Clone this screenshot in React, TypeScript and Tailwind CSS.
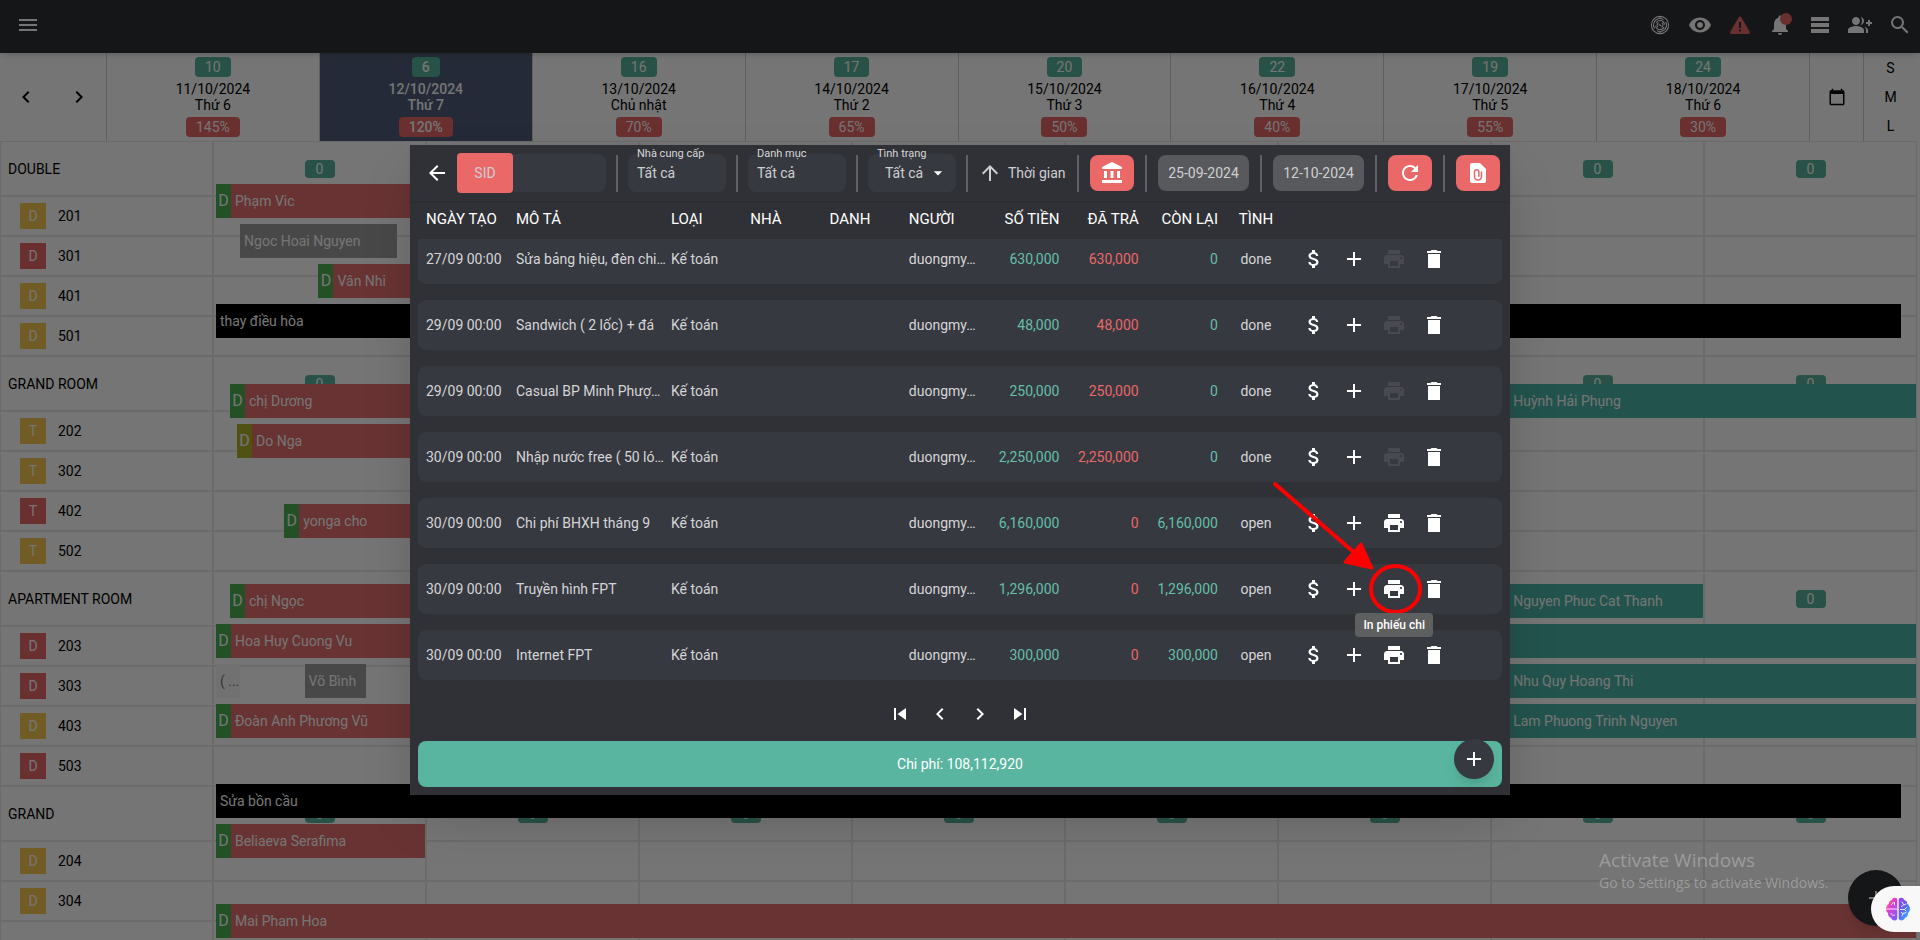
import type { ReactNode } from 'react';
import clsx from 'clsx';
import {
  MdAccountBalance,
  MdAdd,
  MdArrowBack,
  MdArrowDropDown,
  MdArrowUpward,
  MdAttachMoney,
  MdCalendarToday,
  MdChevronLeft,
  MdChevronRight,
  MdGroupAdd,
  MdMenu,
  MdNotifications,
  MdPrint,
  MdRefresh,
  MdSearch,
  MdSkipNext,
  MdSkipPrevious,
  MdTableRows,
  MdVisibility,
} from 'react-icons/md';

interface Day {
  date: string;
  weekday: string;
  free: number;
  load: string;
}

interface Room {
  number: string;
  status: string;
  dirty?: boolean;
}

interface RoomGroup {
  name: string;
  rooms: Room[];
}

type BookingKind = 'stay' | 'upcoming' | 'left' | 'blocked' | 'ghost';

interface Booking {
  lane: number;
  from: number; // in days from the first column
  to: number;
  name: string;
  kind: BookingKind;
  tag?: 'green' | 'lime';
}

interface Expense {
  created: string;
  description: string;
  amount: string;
  paid: string;
  left: string;
  status: 'done' | 'open';
}

const TODAY = '12/10/2024';

const days: Day[] = [
  { date: '11/10/2024', weekday: 'Thứ 6', free: 10, load: '145%' },
  { date: '12/10/2024', weekday: 'Thứ 7', free: 6, load: '120%' },
  { date: '13/10/2024', weekday: 'Chủ nhật', free: 16, load: '70%' },
  { date: '14/10/2024', weekday: 'Thứ 2', free: 17, load: '65%' },
  { date: '15/10/2024', weekday: 'Thứ 3', free: 20, load: '50%' },
  { date: '16/10/2024', weekday: 'Thứ 4', free: 22, load: '40%' },
  { date: '17/10/2024', weekday: 'Thứ 5', free: 19, load: '55%' },
  { date: '18/10/2024', weekday: 'Thứ 6', free: 24, load: '30%' },
];

const groups: RoomGroup[] = [
  {
    name: 'DOUBLE',
    rooms: [
      { number: '201', status: 'D' },
      { number: '301', status: 'D', dirty: true },
      { number: '401', status: 'D' },
      { number: '501', status: 'D' },
    ],
  },
  {
    name: 'GRAND ROOM',
    rooms: [
      { number: '202', status: 'T' },
      { number: '302', status: 'T' },
      { number: '402', status: 'T', dirty: true },
      { number: '502', status: 'T' },
    ],
  },
  {
    name: 'APARTMENT ROOM',
    rooms: [
      { number: '203', status: 'D', dirty: true },
      { number: '303', status: 'D', dirty: true },
      { number: '403', status: 'D' },
      { number: '503', status: 'D', dirty: true },
    ],
  },
  {
    name: 'GRAND',
    rooms: [
      { number: '204', status: 'D' },
      { number: '304', status: 'D' },
    ],
  },
  { name: '', rooms: [] },
];

const LANES = 19;

const bookings: Booking[] = [
  { lane: 0, from: 0.014, to: 0.995, name: 'Phạm Vic', kind: 'stay', tag: 'green' },
  { lane: 1, from: 0.127, to: 0.866, name: 'Ngoc Hoai Nguyen', kind: 'left' },
  { lane: 2, from: 0.495, to: 1.995, name: 'Vân Nhi', kind: 'stay', tag: 'green' },
  { lane: 3, from: 0.014, to: 7.925, name: 'thay điều hòa', kind: 'blocked' },
  { lane: 5, from: 0.08, to: 1.995, name: 'chị Dương', kind: 'stay', tag: 'green' },
  { lane: 5, from: 6.015, to: 7.995, name: 'Huỳnh Hải Phụng', kind: 'upcoming', tag: 'green' },
  { lane: 6, from: 0.113, to: 1.995, name: 'Do Nga', kind: 'stay', tag: 'lime' },
  { lane: 8, from: 0.334, to: 1.995, name: 'yonga cho', kind: 'stay', tag: 'green' },
  { lane: 10, from: 0.08, to: 1.995, name: 'chị Ngọc', kind: 'stay', tag: 'green' },
  { lane: 10, from: 6.015, to: 6.995, name: 'Nguyen Phuc Cat Thanh', kind: 'upcoming', tag: 'green' },
  { lane: 11, from: 0.014, to: 1.995, name: 'Hoa Huy Cuong Vu', kind: 'stay', tag: 'green' },
  { lane: 11, from: 5.015, to: 7.995, name: '', kind: 'upcoming', tag: 'green' },
  { lane: 12, from: 0.014, to: 0.127, name: '( ...', kind: 'ghost' },
  { lane: 12, from: 0.43, to: 0.718, name: 'Võ Bình', kind: 'left' },
  { lane: 12, from: 6.015, to: 7.995, name: 'Nhu Quy Hoang Thi', kind: 'upcoming', tag: 'green' },
  { lane: 13, from: 0.014, to: 1.995, name: 'Đoàn Anh Phương Vũ', kind: 'stay', tag: 'green' },
  { lane: 13, from: 6.015, to: 7.995, name: 'Lam Phuong Trinh Nguyen', kind: 'upcoming', tag: 'green' },
  { lane: 15, from: 0.014, to: 7.925, name: 'Sửa bồn cầu', kind: 'blocked' },
  { lane: 16, from: 0.014, to: 0.995, name: 'Beliaeva Serafima', kind: 'stay', tag: 'green' },
  { lane: 18, from: 0.014, to: 7.995, name: 'Mai Pham Hoa', kind: 'stay', tag: 'green' },
];

const bookingColors: Record<BookingKind, string> = {
  stay: 'bg-[#e4706f] text-white',
  upcoming: 'bg-[#4eb6a8] text-white',
  left: 'bg-[#9e9e9e] text-white',
  blocked: 'bg-black text-white',
  ghost: 'bg-[#f7f7f7] text-[#7a7a7a]',
};

const expenses: Expense[] = [
  { created: '27/09 00:00', description: 'Sửa bảng hiệu, đèn chi…', amount: '630,000', paid: '630,000', left: '0', status: 'done' },
  { created: '29/09 00:00', description: 'Sandwich ( 2 lốc) + đá', amount: '48,000', paid: '48,000', left: '0', status: 'done' },
  { created: '29/09 00:00', description: 'Casual BP Minh Phượ…', amount: '250,000', paid: '250,000', left: '0', status: 'done' },
  { created: '30/09 00:00', description: 'Nhập nước free ( 50 ló…', amount: '2,250,000', paid: '2,250,000', left: '0', status: 'done' },
  { created: '30/09 00:00', description: 'Chi phí BHXH tháng 9', amount: '6,160,000', paid: '0', left: '6,160,000', status: 'open' },
  { created: '30/09 00:00', description: 'Truyền hình FPT', amount: '1,296,000', paid: '0', left: '1,296,000', status: 'open' },
  { created: '30/09 00:00', description: 'Internet FPT', amount: '300,000', paid: '0', left: '300,000', status: 'open' },
];

const rowGrid = 'grid grid-cols-[90px_155px_repeat(7,minmax(0,1fr))_60px_208px] items-center px-2';

const LabyrinthIcon = () => (
  <svg width="20" height="20" viewBox="0 0 20 20" fill="none" stroke="currentColor" strokeWidth="1.1">
    <circle cx="10" cy="10" r="8.6" />
    <circle cx="10" cy="10" r="6.5" strokeDasharray="17 3.4" strokeDashoffset="4" />
    <circle cx="10" cy="10" r="4.5" strokeDasharray="11 3.1" strokeDashoffset="-2" />
    <path d="M8 12.2a2.6 2.6 0 0 1 .6-4.4M12 7.8a2.6 2.6 0 0 1-.6 4.4M8.8 9.2l2.4 1.8M10 1.4v2.2M10 16.4v2.2" />
  </svg>
);

const AlertIcon = () => (
  <svg width="24" height="24" viewBox="0 0 24 24" fill="currentColor">
    <path
      fillRule="evenodd"
      d="M13.3 4.3a1.5 1.5 0 0 0-2.6 0L2.3 18.7A1.5 1.5 0 0 0 3.6 21h16.8a1.5 1.5 0 0 0 1.3-2.3L13.3 4.3zM11 9h2v6h-2V9zm0 7.5h2v2h-2v-2z"
    />
  </svg>
);

const TrashIcon = () => (
  <svg width="24" height="24" viewBox="0 0 24 24" fill="currentColor">
    <path d="M6 21h12V7H6v14zM19 4h-3.5l-1-1h-5l-1 1H5v2h14V4z" />
  </svg>
);

const AttachedFileIcon = () => (
  <svg width="24" height="24" viewBox="0 0 24 24" fill="none">
    <path fill="currentColor" d="M14 2H6a2 2 0 0 0-2 2v16a2 2 0 0 0 2 2h12a2 2 0 0 0 2-2V8l-6-6z" />
    <path
      stroke="#ea6868"
      strokeWidth="1.5"
      strokeLinecap="round"
      d="M15.5 11v4.500a3.500 3.500 0 0 1-7 0V11a2.200 2.200 0 0 1 4.400 0v4.200"
    />
  </svg>
);

const BrainIcon = () => (
  <svg width="26" height="26" viewBox="0 0 26 26">
    <defs>
      <linearGradient id="brain-left" x1="0" y1="0" x2="0.8" y2="1">
        <stop offset="0" stopColor="#fb9a2c" />
        <stop offset="0.4" stopColor="#ea3bd0" />
        <stop offset="1" stopColor="#7b5cff" />
      </linearGradient>
      <linearGradient id="brain-right" x1="0" y1="0" x2="0.8" y2="1">
        <stop offset="0" stopColor="#a13df0" />
        <stop offset="0.5" stopColor="#5f62f6" />
        <stop offset="1" stopColor="#36b6ff" />
      </linearGradient>
    </defs>
    <path
      fill="url(#brain-left)"
      d="M12.3 4c0-1.4-1-2.2-2.4-2.2-1.7 0-2.7.9-3 2.2C5 4.2 3.6 5.8 3.8 7.8 2.2 8.8 1 10.9 1 13c0 1.7.8 3.2 2 4-.2 2.4 1 4.3 3 4.8.6 1.7 2 2.6 3.7 2.6 1.5 0 2.6-.9 2.6-2.4V4z"
    />
    <path
      fill="url(#brain-right)"
      d="M13.7 4c0-1.4 1-2.2 2.4-2.2 1.7 0 2.7.9 3 2.2 1.9.2 3.3 1.8 3.1 3.8 1.6 1 2.8 3.1 2.8 5.2 0 1.7-.8 3.2-2 4 .2 2.4-1 4.3-3 4.8-.6 1.7-2 2.6-3.7 2.6-1.5 0-2.6-.9-2.6-2.4V4z"
    />
    <g fill="none" stroke="#fff" strokeOpacity="0.85" strokeWidth="1" strokeLinecap="round">
      <path d="M1.5 13h10.5M6.5 8.5c.4-1.3 1.6-2 3-1.8M6 17.5c.5 1.5 2 2.2 3.6 1.7M9.5 6.7V9" />
      <path d="M17 6l1.5 2.5M21 8l-2.5 1-2 1.5M15.5 13.5h4l2-2M19.5 13.5l1.5 1.5M17 20l1-2.5 3-.8M18 17.5l-2-1" />
    </g>
  </svg>
);

const Counter = ({ color, children }: { color: 'teal' | 'red'; children: ReactNode }) => (
  <span
    className={clsx(
      'h-5 rounded px-[10px] text-sm leading-5 text-white',
      color === 'teal' ? 'bg-[#57b39b]' : 'bg-[#e66667]'
    )}
  >
    {children}
  </span>
);

const Divider = () => <span className="h-[37px] w-[2px] shrink-0 bg-[#606166]" />;

const IconButton = ({ label, disabled, children }: { label: string; disabled?: boolean; children: ReactNode }) => (
  <button
    type="button"
    aria-label={label}
    disabled={disabled}
    className="flex size-10 shrink-0 items-center justify-center disabled:text-[#484951]"
  >
    {children}
  </button>
);

const AccentButton = ({ label, children }: { label: string; children: ReactNode }) => (
  <button
    type="button"
    aria-label={label}
    className="flex h-9 w-11 shrink-0 items-center justify-center rounded-lg bg-[#ea6868] text-white"
  >
    {children}
  </button>
);

const DateButton = ({ children }: { children: ReactNode }) => (
  <button type="button" className="h-9 w-[91px] shrink-0 rounded-lg bg-[#58595c] text-sm text-[#cfcfd1]">
    {children}
  </button>
);

function TopBar() {
  return (
    <header className="relative z-10 flex h-[53px] shrink-0 items-center justify-between bg-[#2f3034] pb-1 pl-2 text-white shadow-md">
      <IconButton label="Menu">
        <MdMenu size={24} />
      </IconButton>
      <nav className="flex">
        <IconButton label="Radar">
          <LabyrinthIcon />
        </IconButton>
        <IconButton label="Xem">
          <MdVisibility size={24} />
        </IconButton>
        <button type="button" aria-label="Cảnh báo" className="flex size-10 items-center justify-center text-[#e66667]">
          <AlertIcon />
        </button>
        <div className="relative">
          <IconButton label="Thông báo">
            <MdNotifications size={24} />
          </IconButton>
          <span className="absolute top-2 right-2 size-3 rounded-full bg-[#e66667]" />
        </div>
        <IconButton label="Danh sách">
          <MdTableRows size={24} />
        </IconButton>
        <IconButton label="Thêm khách">
          <MdGroupAdd size={24} />
        </IconButton>
        <IconButton label="Tìm kiếm">
          <MdSearch size={24} />
        </IconButton>
      </nav>
    </header>
  );
}

function DayHeader() {
  return (
    <div className="flex h-[88px] shrink-0 text-sm">
      <div className="flex flex-[2] items-center border-r border-[#cfcfcf]">
        <button type="button" aria-label="Trước" className="flex flex-1 justify-center">
          <MdChevronLeft size={24} />
        </button>
        <button type="button" aria-label="Sau" className="flex flex-1 justify-center">
          <MdChevronRight size={24} />
        </button>
      </div>
      {days.map((day) => (
        <div
          key={day.date}
          className={clsx(
            'flex flex-[4] flex-col items-center justify-between border-r border-[#cfcfcf] py-1 leading-4',
            day.date === TODAY && 'bg-[#4f5d78] font-medium text-white'
          )}
        >
          <Counter color="teal">{day.free}</Counter>
          <div className="text-center">
            <div>{day.date}</div>
            <div>{day.weekday}</div>
          </div>
          <Counter color="red">{day.load}</Counter>
        </div>
      ))}
      <button type="button" aria-label="Chọn ngày" className="flex flex-1 items-center justify-center border-r border-[#cfcfcf]">
        <MdCalendarToday size={18} />
      </button>
      <div className="flex flex-1 flex-col">
        {['S', 'M', 'L'].map((size) => (
          <button key={size} type="button" className="flex-1">
            {size}
          </button>
        ))}
      </div>
    </div>
  );
}

function Schedule() {
  return (
    <div className="relative min-h-0 flex-1 overflow-hidden text-sm">
      {groups.map((group, index) => (
        <div key={index}>
          <div className="grid h-[55px] grid-cols-9">
            <div className="flex items-center border border-[#e9e9e9] pl-[7px]">{group.name}</div>
            {days.map((day) => (
              <div key={day.date} className="flex items-center justify-center border border-[#e9e9e9]">
                <span className="h-[18px] w-[30px] rounded bg-[#57b39b] text-center leading-[18px] text-white">0</span>
              </div>
            ))}
          </div>
          {group.rooms.map((room) => (
            <div key={room.number} className="grid h-10 grid-cols-9">
              <div className="flex items-center gap-3 border border-[#e9e9e9] pl-[19px]">
                <span
                  className={clsx(
                    'size-[26px] text-center leading-[26px] text-white',
                    room.dirty ? 'bg-[#e66667]' : 'bg-[#f9c851]'
                  )}
                >
                  {room.status}
                </span>
                {room.number}
              </div>
              {days.map((day) => (
                <div key={day.date} className="border border-[#e9e9e9]" />
              ))}
            </div>
          ))}
        </div>
      ))}

      {/* Bookings over the room grid */}
      <div className="absolute inset-x-0 top-[43px] grid grid-cols-9">
        <div className="col-span-8 col-start-2">
          {Array.from({ length: LANES }, (_, lane) => (
            <div key={lane} className="relative h-10">
              {bookings
                .filter((booking) => booking.lane === lane)
                .map((booking) => (
                  <div
                    key={booking.from}
                    className={clsx('absolute flex h-[34px] items-center overflow-hidden', bookingColors[booking.kind])}
                    style={{
                      left: `${(booking.from / days.length) * 100}%`,
                      width: `${((booking.to - booking.from) / days.length) * 100}%`,
                    }}
                  >
                    {booking.tag && (
                      <span
                        className={clsx(
                          'w-[15px] shrink-0 self-stretch text-center text-base leading-[34px]',
                          booking.tag === 'green' ? 'bg-[#4caf50]' : 'bg-[#afb42b]'
                        )}
                      >
                        D
                      </span>
                    )}
                    <span className="pl-1 whitespace-nowrap">{booking.name}</span>
                  </div>
                ))}
            </div>
          ))}
        </div>
      </div>
    </div>
  );
}

function FilterField({ id, label }: { id: string; label: string }) {
  return (
    <div className="relative h-[38px] w-[98px] shrink-0 rounded-lg bg-[#373940]">
      <label htmlFor={id} className="absolute -top-2 left-[9px] text-[11px] leading-4 whitespace-nowrap text-[#d8d8da]">
        {label}
      </label>
      <input id={id} defaultValue="Tất cả" className="h-[38px] w-full bg-transparent px-[9px] text-sm outline-none" />
    </div>
  );
}

function Toolbar() {
  return (
    <div className="relative z-10 flex h-14 shrink-0 items-center gap-[11px] px-[10px] text-sm text-[#cfcfd1] shadow-sm">
      <div className="flex flex-1 items-center gap-[10px]">
        <div className="flex items-center pl-[5px]">
          <button type="button" aria-label="Quay lại" className="text-white">
            <MdArrowBack size={24} />
          </button>
          <div className="ml-2 flex h-10 items-center">
            <label htmlFor="sid" className="flex h-10 w-14 items-center justify-center rounded bg-[#ea6868]">
              SID
            </label>
            <input id="sid" className="h-[38px] w-[93px] rounded-r-lg bg-[#373940] px-2 outline-none" />
          </div>
        </div>
        <Divider />
        <FilterField id="supplier" label="Nhà cung cấp" />
        <Divider />
        <FilterField id="category" label="Danh mục" />
        <Divider />
        <div className="relative h-[38px] w-[88px] shrink-0 rounded-lg bg-[#373940]">
          <label
            htmlFor="status"
            className="absolute -top-2 left-[9px] text-[11px] leading-4 whitespace-nowrap text-[#d8d8da]"
          >
            Tình trạng
          </label>
          <select id="status" className="h-[38px] w-full appearance-none bg-transparent pl-[17px] outline-none">
            <option>Tất cả</option>
          </select>
          <MdArrowDropDown size={20} className="pointer-events-none absolute top-[9px] right-2 text-white" />
        </div>
        <Divider />
        <button type="button" className="flex items-center gap-[6px] whitespace-nowrap">
          <MdArrowUpward size={24} />
          Thời gian
        </button>
      </div>
      <Divider />
      <AccentButton label="Ngân hàng">
        <MdAccountBalance size={24} />
      </AccentButton>
      <Divider />
      <DateButton>25-09-2024</DateButton>
      <Divider />
      <DateButton>12-10-2024</DateButton>
      <Divider />
      <AccentButton label="Tải lại">
        <MdRefresh size={24} />
      </AccentButton>
      <Divider />
      <AccentButton label="Tệp">
        <AttachedFileIcon />
      </AccentButton>
    </div>
  );
}

function ExpenseTable() {
  return (
    <table className="mx-2 block text-sm">
      <thead className="block text-[15px] text-white">
        <tr className={clsx(rowGrid, 'h-[38px] text-left')}>
          <th className="font-normal">NGÀY TẠO</th>
          <th className="font-normal">MÔ TẢ</th>
          <th className="font-normal">LOẠI</th>
          <th className="font-normal">NHÀ</th>
          <th className="font-normal">DANH</th>
          <th className="font-normal">NGƯỜI</th>
          <th className="pr-2 text-right font-normal">SỐ TIỀN</th>
          <th className="pr-2 text-right font-normal">ĐÃ TRẢ</th>
          <th className="pr-2 text-right font-normal">CÒN LẠI</th>
          <th className="text-center font-normal">TÌNH</th>
          <th />
        </tr>
      </thead>
      <tbody className="flex h-[441px] flex-col justify-end gap-4 overflow-hidden text-[#d5d5d8]">
        {expenses.map((expense, index) => (
          <tr key={index} className={clsx(rowGrid, 'h-[50px] shrink-0 rounded-lg bg-[#373940]')}>
            <td className="whitespace-nowrap">{expense.created}</td>
            <td className="whitespace-nowrap">{expense.description}</td>
            <td>Kế toán</td>
            <td />
            <td />
            <td>duongmy…</td>
            <td className="pr-2 text-right text-[#64bfa8]">{expense.amount}</td>
            <td className="pr-2 text-right text-[#ea6868]">{expense.paid}</td>
            <td className="pr-2 text-right text-[#64bfa8]">{expense.left}</td>
            <td className="text-center">{expense.status}</td>
            <td className="flex pl-2 text-white">
              <IconButton label="Thanh toán">
                <MdAttachMoney size={24} />
              </IconButton>
              <IconButton label="Thêm">
                <MdAdd size={24} />
              </IconButton>
              <IconButton label="In phiếu chi" disabled={expense.status === 'done'}>
                <MdPrint size={24} />
              </IconButton>
              <IconButton label="Xóa">
                <TrashIcon />
              </IconButton>
            </td>
          </tr>
        ))}
      </tbody>
    </table>
  );
}

function ExpenseDialog() {
  return (
    <section
      role="dialog"
      aria-label="Chi phí"
      className="relative flex w-full max-w-[1100px] flex-col bg-[#303136] shadow-2xl"
    >
      <Toolbar />
      <ExpenseTable />
      <div className="flex justify-center pt-[14px] pb-[7px] text-white">
        <IconButton label="Trang đầu">
          <MdSkipPrevious size={24} />
        </IconButton>
        <IconButton label="Trang trước">
          <MdChevronLeft size={24} />
        </IconButton>
        <IconButton label="Trang sau">
          <MdChevronRight size={24} />
        </IconButton>
        <IconButton label="Trang cuối">
          <MdSkipNext size={24} />
        </IconButton>
      </div>
      <div className="relative mx-2 mb-2 rounded-lg bg-[#59b59f] py-3 text-center text-sm leading-[22px] text-white">
        Chi phí: 108,112,920
        <button
          type="button"
          aria-label="Thêm chi phí"
          className="absolute -top-[2px] right-2 flex size-10 items-center justify-center rounded-full bg-[#373940] shadow-lg"
        >
          <MdAdd size={24} />
        </button>
      </div>

      <svg width="170" height="144" viewBox="0 0 170 144" className="pointer-events-none absolute top-[330px] right-[80px]">
        <path d="M15 9L97 80" stroke="#f00" strokeWidth="4" strokeLinecap="round" />
        <path d="M101 69L112 93L85 87Z" fill="#f00" stroke="#f00" strokeWidth="3" strokeLinejoin="round" />
        <ellipse cx="135.5" cy="114" rx="24.5" ry="23" fill="none" stroke="#f00" strokeWidth="4" />
      </svg>
      <span
        role="tooltip"
        className="absolute top-[468px] right-[77px] h-6 rounded bg-[#5e5f5f] px-2 text-xs leading-6 font-medium text-white"
      >
        In phiếu chi
      </span>
    </section>
  );
}

export default function App() {
  return (
    <main className="relative flex h-screen flex-col overflow-hidden bg-white font-['Roboto','Liberation_Sans',sans-serif] text-black">
      <TopBar />
      <div className="flex min-h-0 flex-1 flex-col pr-[3px]">
        <DayHeader />
        <Schedule />
      </div>
      <button
        type="button"
        aria-label="Thêm đặt phòng"
        className="absolute right-4 bottom-[14px] flex size-14 items-center justify-center rounded-full bg-[#2f3034] text-white shadow-lg"
      >
        <MdAdd size={24} />
      </button>

      <div className="absolute inset-0 z-20 flex items-center justify-center bg-black/54">
        <ExpenseDialog />
      </div>

      {/* System watermark and side widget stay above the backdrop */}
      <div className="absolute right-[85px] bottom-[46px] z-30 w-[236px] font-['Open_Sans',sans-serif] whitespace-nowrap text-[#9c9c9c]">
        <div className="text-[19px] leading-6">Activate Windows</div>
        <div className="text-sm leading-[22px]">Go to Settings to activate Windows.</div>
      </div>
      <button
        type="button"
        aria-label="Trợ lý"
        className="absolute right-0 bottom-2 z-30 flex h-[46px] w-[49px] items-center rounded-l-full bg-[#f8f8f8] pl-[14px]"
      >
        <BrainIcon />
      </button>
    </main>
  );
}
